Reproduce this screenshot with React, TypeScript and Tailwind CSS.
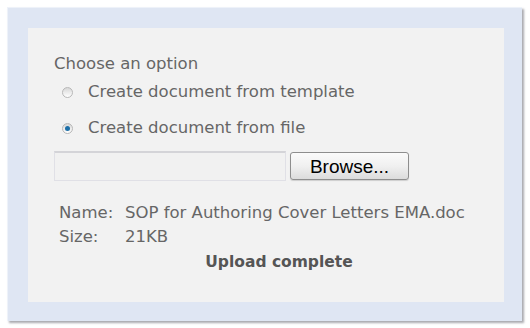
import React from "react";

function Radio({ checked }: { checked?: boolean }) {
  return (
    <span className="relative inline-flex w-[11px] h-[11px] rounded-full border border-[#b8b8b8] bg-gradient-to-b from-[#d8d8d8] to-[#ffffff] items-center justify-center">
      {checked && <span className="w-[5px] h-[5px] rounded-full bg-[#1d6fa8]" />}
    </span>
  );
}

export default function App() {
  return (
    <div className="w-[530px] h-[328px] bg-white pt-[7px] pl-[7px]" style={{ fontFamily: '"DejaVu Sans", Verdana, sans-serif' }}>
      <div className="w-[515px] h-[314px] bg-[#dfe6f3] border-t border-l border-[#eef2f9] shadow-[2px_2px_2px_rgba(100,100,110,0.55)] pt-[20px] pl-[20px]">
        <div className="w-[476px] h-[274px] bg-[#f2f2f2] pt-[26px] pl-[26px] text-[#666666] text-[16.5px]">
          <div className="leading-[20px] h-[20px]">Choose an option</div>
          <div className="flex items-center mt-[8px] pl-[8px] h-[20px]">
            <Radio />
            <span className="ml-[15px]">Create document from template</span>
          </div>
          <div className="flex items-center mt-[16px] pl-[8px] h-[20px]">
            <Radio checked />
            <span className="ml-[15px]">Create document from file</span>
          </div>
          <div className="flex items-center mt-[13px]">
            <div className="w-[232px] h-[30px] border border-[#e0e0e6] border-t-[#d4d4d8] border-t-2 bg-[#f1f1f1]" />
            <button className="ml-[4px] w-[119px] h-[28px] rounded-[3px] border border-[#8e8e8e] bg-gradient-to-b from-[#fbfbfb] via-[#f0f0f0] to-[#dcdcdc] text-black text-[19px] leading-none shadow-[0_1px_1px_rgba(0,0,0,0.15)]" style={{ fontFamily: '"Liberation Sans", Arial, sans-serif' }}>
              Browse...
            </button>
          </div>
          <div className="mt-[20px] ml-[5px] leading-[24px]">
            <div className="flex h-[24px]">
              <span className="w-[66px]">Name:</span>
              <span>SOP for Authoring Cover Letters EMA.doc</span>
            </div>
            <div className="flex h-[24px]">
              <span className="w-[66px]">Size:</span>
              <span>21KB</span>
            </div>
          </div>
          <div className="mt-[3px] w-[450px] text-center font-bold text-[#555555] text-[15.5px] leading-[20px]">Upload complete</div>
        </div>
      </div>
    </div>
  );
}
